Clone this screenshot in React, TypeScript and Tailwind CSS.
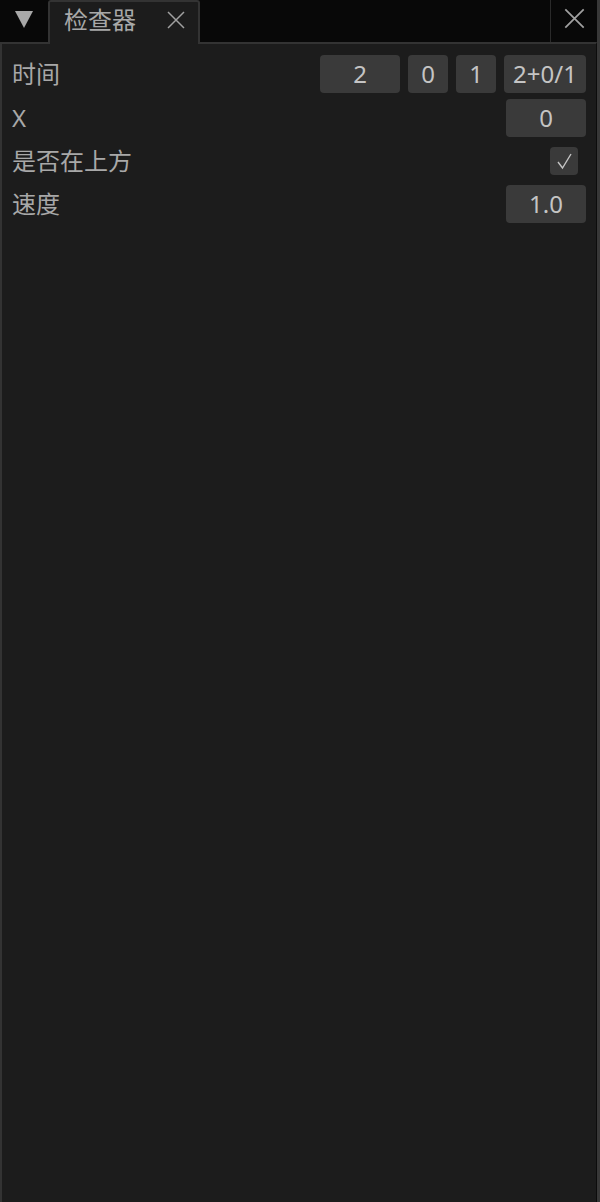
import React from "react";

const font = { fontFamily: '"Noto Sans", "Noto Sans CJK SC", sans-serif' };

const Field: React.FC<{ value: string; w: string }> = ({ value, w }) => (
  <div className={`${w} h-[38px] rounded-[4px] bg-[#3a3a3a] text-[#c4c4c4] text-[24px] leading-none flex items-center justify-center`}>
    {value}
  </div>
);

const Cross: React.FC<{ size: number }> = ({ size }) => (
  <svg width={size} height={size} viewBox="0 0 20 20" fill="none" stroke="#a0a0a0" strokeWidth="1.5">
    <path d="M2 2 L18 18 M18 2 L2 18" />
  </svg>
);

const App: React.FC = () => {
  return (
    <div className="w-[600px] h-[1202px] bg-[#080808] flex" style={font}>
      <div className="w-[597px] flex flex-col">
        <div className="h-[42px] flex items-stretch shrink-0">
          <div className="w-[48px] flex items-center justify-center pb-[4px]">
            <svg width="20" height="20" viewBox="0 0 20 20">
              <path d="M1 2 H19 L10 19 Z" fill="#a8a8a8" />
            </svg>
          </div>
          <div className="w-[152px] bg-[#1c1c1c] border-x-2 border-t-2 border-[#333333] rounded-t-[3px] flex items-center pl-[14px] pr-[12px] pb-[6px] -mb-[2px] relative z-10">
            <span className="text-[24px] text-[#a8a8a8] leading-none">检查器</span>
            <div className="ml-auto"><Cross size={20} /></div>
          </div>
          <div className="flex-1" />
          <div className="w-[47px] border-l border-[#2a2a2a] flex items-center justify-center pb-[6px]">
            <Cross size={23} />
          </div>
        </div>
        <div className="flex-1 bg-[#1c1c1c] border-l-2 border-t-2 border-r border-l-[#333333] border-t-[#333333] border-r-[#0c0c0c] pl-[10px] pr-[10px] pt-[11px] flex flex-col gap-[6px]">
          <div className="flex items-center h-[38px]">
            <span className="text-[24px] text-[#a8a8a8]">时间</span>
            <div className="ml-auto flex gap-[8px]">
              <Field value="2" w="w-[80px]" />
              <Field value="0" w="w-[40px]" />
              <Field value="1" w="w-[40px]" />
              <Field value="2+0/1" w="w-[82px]" />
            </div>
          </div>
          <div className="flex items-center h-[38px]">
            <span className="text-[24px] text-[#a8a8a8]">X</span>
            <div className="ml-auto">
              <Field value="0" w="w-[80px]" />
            </div>
          </div>
          <div className="flex items-center h-[36px]">
            <span className="text-[24px] text-[#a8a8a8]">是否在上方</span>
            <div className="ml-auto mr-[8px] w-[28px] h-[28px] rounded-[4px] bg-[#3a3a3a] flex items-center justify-center">
              <svg width="20" height="20" viewBox="0 0 20 20" fill="none" stroke="#c4c4c4" strokeWidth="1.4">
                <path d="M4 11 L8.5 17 L17 3" />
              </svg>
            </div>
          </div>
          <div className="flex items-center h-[38px]">
            <span className="text-[24px] text-[#a8a8a8]">速度</span>
            <div className="ml-auto">
              <Field value="1.0" w="w-[80px]" />
            </div>
          </div>
        </div>
      </div>
      <div className="w-[3px] bg-[#383838]" />
    </div>
  );
};

export default App;
